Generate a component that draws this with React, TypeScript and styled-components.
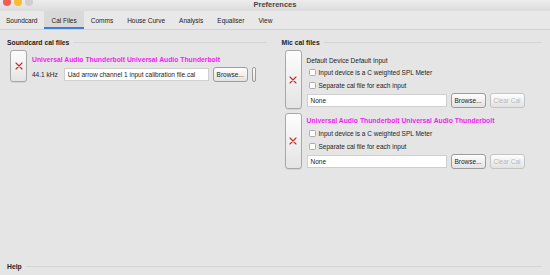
import styled, { createGlobalStyle } from "styled-components";

const GlobalStyle = createGlobalStyle`
  html, body { margin: 0; padding: 0; }
  body {
    background: #e5e5e5;
    font-family: "Liberation Sans", Arial, sans-serif;
    color: #1e1e1e;
    overflow: hidden;
  }
`;

const tabs = ["Soundcard", "Cal Files", "Comms", "House Curve", "Analysis", "Equaliser", "View"];

const Window = styled.div`
  width: 550px;
  height: 275px;
  display: flex;
  flex-direction: column;
  background: #e5e5e5;
`;

const TitleBar = styled.div`
  height: 11px;
  position: relative;
  display: flex;
  align-items: center;
  justify-content: center;
  background: linear-gradient(#ececec, #dcdcdc);
  overflow: hidden;
`;

const Lights = styled.div`
  position: absolute;
  left: 3px;
  top: -2px;
  display: flex;
  gap: 3px;
`;

const Light = styled.span<{ $c: string }>`
  width: 8px;
  height: 8px;
  border-radius: 50%;
  background: ${(p) => p.$c};
`;

const Title = styled.div`
  font-size: 7.5px;
  font-weight: 700;
  color: #444;
  margin-top: -3px;
`;

const TabBar = styled.div`
  height: 18px;
  display: flex;
  background: #e8e8e8;
  border-bottom: 1px solid #d3d3d3;
`;

const Tab = styled.div<{ $active?: boolean }>`
  display: flex;
  align-items: center;
  padding: 1px 7px 0;
  font-size: 6.5px;
  color: #222;
  background: ${(p) => (p.$active ? "#d9d9d9" : "transparent")};
  box-shadow: ${(p) => (p.$active ? "inset 0 -2px 0 #3b7dd8" : "none")};
  &:first-child { padding-left: 6px; }
`;

const Main = styled.div`
  flex: 1;
  display: flex;
  gap: 15px;
  padding: 8px 9px 0 7px;
`;

const Column = styled.div`
  flex: 1;
  display: flex;
  flex-direction: column;
`;

const Heading = styled.div`
  display: flex;
  align-items: center;
  font-size: 6.8px;
  font-weight: 700;
  color: #222;
  height: 8px;
  &::after {
    content: "";
    flex: 1;
    height: 1px;
    background: #d4d4d4;
    margin-left: 4px;
  }
`;

const Entry = styled.div`
  display: flex;
  gap: 5px;
  margin-top: 4px;
  padding-left: 3px;
  &:first-of-type { margin-top: 8px; }
`;

const RemoveButton = styled.div<{ $h: number }>`
  width: 17px;
  height: ${(p) => p.$h}px;
  box-sizing: border-box;
  border: 1px solid #a8a8a8;
  border-radius: 3px;
  background: linear-gradient(#fdfdfd, #e4e4e4);
  box-shadow: 0 1px 0 rgba(0, 0, 0, 0.08);
  display: flex;
  align-items: center;
  justify-content: center;
  flex-shrink: 0;
`;

const EntryBody = styled.div<{ $top: number }>`
  display: flex;
  flex-direction: column;
  gap: 2px;
  padding-top: ${(p) => p.$top}px;
  flex: 1;
`;

const Label = styled.div<{ $magenta?: boolean }>`
  font-size: ${(p) => (p.$magenta ? 6.8 : 6.5)}px;
  height: ${(p) => (p.$magenta ? 10 : 9)}px;
  line-height: ${(p) => (p.$magenta ? 10 : 9)}px;
  font-weight: ${(p) => (p.$magenta ? 700 : 400)};
  color: ${(p) => (p.$magenta ? "#f01ef0" : "#222")};
  white-space: nowrap;
`;

const Row = styled.div`
  display: flex;
  align-items: center;
  gap: 4px;
`;

const Small = styled.span`
  font-size: 6.5px;
  color: #222;
  margin-right: 2px;
`;

const Field = styled.div<{ $w: number }>`
  width: ${(p) => p.$w}px;
  height: 13px;
  box-sizing: border-box;
  background: #fff;
  border: 1px solid #cfcfcf;
  font-size: 6.5px;
  color: #222;
  display: flex;
  align-items: center;
  padding-left: 3px;
  white-space: nowrap;
`;

const Button = styled.div<{ $disabled?: boolean; $w?: number }>`
  width: ${(p) => p.$w ?? 35}px;
  height: 15px;
  box-sizing: border-box;
  border: 1px solid ${(p) => (p.$disabled ? "#c4c4c4" : "#9c9c9c")};
  border-radius: 3px;
  background: linear-gradient(#fefefe, #e2e2e2);
  font-size: 6.5px;
  color: ${(p) => (p.$disabled ? "#b8b8b8" : "#222")};
  display: flex;
  align-items: center;
  justify-content: center;
  overflow: hidden;
  flex-shrink: 0;
`;

const CheckRow = styled.div`
  display: flex;
  align-items: center;
  gap: 3px;
  height: 11px;
  padding-left: 2px;
  font-size: 6.5px;
  color: #222;
`;

const Box = styled.span`
  width: 7px;
  height: 7px;
  box-sizing: border-box;
  border: 1px solid #a9a9a9;
  border-radius: 1.5px;
  background: #fff;
`;

const HelpArea = styled.div`
  padding: 0 9px 5px 7px;
`;

const XIcon = () => (
  <svg width="8" height="8" viewBox="0 0 8 8">
    <path d="M1 1L7 7M7 1L1 7" stroke="#c42a2a" strokeWidth="1.1" strokeLinecap="round" />
  </svg>
);

const MicEntry = ({ name, magenta }: { name: string; magenta?: boolean }) => (
  <Entry>
    <RemoveButton $h={magenta ? 56 : 59}>
      <XIcon />
    </RemoveButton>
    <EntryBody $top={magenta ? 3 : 6}>
      <Label $magenta={magenta}>{name}</Label>
      <CheckRow><Box />Input device is a C weighted SPL Meter</CheckRow>
      <CheckRow><Box />Separate cal file for each input</CheckRow>
      <Row>
        <Field $w={140}>None</Field>
        <Button>Browse...</Button>
        <Button $disabled>Clear Cal</Button>
      </Row>
    </EntryBody>
  </Entry>
);

export default function App() {
  return (
    <>
      <GlobalStyle />
      <Window>
        <TitleBar>
          <Lights>
            <Light $c="#ee5e57" />
            <Light $c="#f4bc37" />
            <Light $c="#cfcfcf" />
          </Lights>
          <Title>Preferences</Title>
        </TitleBar>
        <TabBar>
          {tabs.map((t) => (
            <Tab key={t} $active={t === "Cal Files"}>{t}</Tab>
          ))}
        </TabBar>
        <Main>
          <Column>
            <Heading>Soundcard cal files</Heading>
            <Entry>
              <RemoveButton $h={32}>
                <XIcon />
              </RemoveButton>
              <EntryBody $top={5}>
                <Label $magenta>Universal Audio Thunderbolt Universal Audio Thunderbolt</Label>
                <Row>
                  <Small>44.1 kHz</Small>
                  <Field $w={145}>Uad arrow channel 1 input calibration file.cal</Field>
                  <Button>Browse...</Button>
                  <Button $w={4} />
                </Row>
              </EntryBody>
            </Entry>
          </Column>
          <Column>
            <Heading>Mic cal files</Heading>
            <MicEntry name="Default Device Default Input" />
            <MicEntry name="Universal Audio Thunderbolt Universal Audio Thunderbolt" magenta />
          </Column>
        </Main>
        <HelpArea>
          <Heading>Help</Heading>
        </HelpArea>
      </Window>
    </>
  );
}
